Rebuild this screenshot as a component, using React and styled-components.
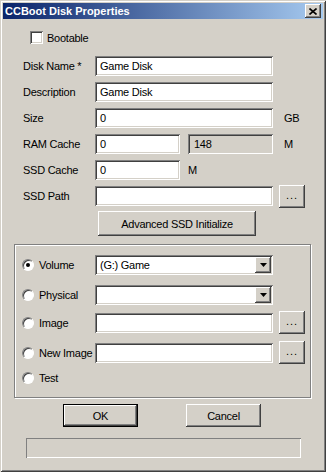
import React from 'react';
import styled, { createGlobalStyle, css } from 'styled-components';

const Global = createGlobalStyle`
  html, body { margin: 0; padding: 0; background: #d4d0c8; }
  body { font-family: "Liberation Sans", Arial, sans-serif; font-size: 11px; color: #000; letter-spacing: -0.25px; }
  * { box-sizing: border-box; }
`;

const raised = css`
  background: #d4d0c8;
  box-shadow: inset -1px -1px 0 #404040, inset 1px 1px 0 #ffffff, inset -2px -2px 0 #808080, inset 2px 2px 0 #d4d0c8;
`;

const sunken = css`
  box-shadow: inset 1px 1px 0 #808080, inset -1px -1px 0 #ffffff, inset 2px 2px 0 #404040, inset -2px -2px 0 #d4d0c8;
`;

const Window = styled.div`
  width: 326px;
  height: 472px;
  background: #d4d0c8;
  padding: 3px;
  display: flex;
  flex-direction: column;
  box-shadow: inset 1px 1px 0 #d4d0c8, inset -1px -1px 0 #404040, inset 2px 2px 0 #ffffff, inset -2px -2px 0 #808080;
`;

const TitleBar = styled.div`
  height: 16px;
  display: flex;
  align-items: center;
  justify-content: space-between;
  padding: 0 2px;
  background: linear-gradient(to right, #0a246a, #a6caf0);
  color: #fff;
  font-weight: bold;
  font-size: 11px;
  letter-spacing: 0;
`;

const CloseButton = styled.div`
  ${raised};
  width: 16px;
  height: 14px;
  display: flex;
  align-items: center;
  justify-content: center;
`;

const Body = styled.div`
  display: flex;
  flex-direction: column;
  align-items: flex-start;
  flex: 1;
`;

const CheckRow = styled.div`
  display: flex;
  align-items: center;
  height: 13px;
  margin: 12px 0 0 27px;
  gap: 4px;
`;

const CheckBox = styled.div`
  ${sunken};
  width: 13px;
  height: 13px;
  background: #fff;
`;

const Form = styled.div`
  display: flex;
  flex-direction: column;
  gap: 6px;
  margin: 12px 0 0 20px;
`;

const Row = styled.div`
  display: flex;
  align-items: center;
  height: 20px;
`;

const Label = styled.div`
  width: 72px;
  white-space: nowrap;
`;

const Field = styled.div`
  ${sunken};
  width: ${p => p.$w}px;
  height: 20px;
  margin-left: ${p => p.$ml || 0}px;
  background: ${p => (p.$readonly ? '#d4d0c8' : '#ffffff')};
  display: flex;
  align-items: center;
  padding: 0 2px 0 ${p => (p.$readonly ? 6 : 5)}px;
  white-space: nowrap;
  overflow: hidden;
`;

const FieldText = styled.span`
  flex: 1;
`;

const Unit = styled.div`
  margin-left: ${p => p.$ml}px;
`;

const Button = styled.div`
  ${raised};
  width: ${p => p.$w}px;
  height: ${p => p.$h}px;
  margin-left: ${p => p.$ml || 0}px;
  margin-top: ${p => p.$mt || 0}px;
  display: flex;
  align-items: center;
  justify-content: center;
  flex-shrink: 0;
  ${p => p.$default && css`
    border: 1px solid #000;
    box-shadow: inset -1px -1px 0 #404040, inset 1px 1px 0 #ffffff, inset -2px -2px 0 #808080;
  `}
`;

const Dots = styled.span`
  font-size: 11px;
  letter-spacing: 1px;
  margin-top: -3px;
`;

const DropButton = styled.div`
  ${raised};
  width: 16px;
  height: 16px;
  display: flex;
  align-items: center;
  justify-content: center;
`;

const Group = styled.div`
  width: 297px;
  height: 154px;
  margin: 8px 0 0 11px;
  border: 1px solid #808080;
  box-shadow: inset 1px 1px 0 #ffffff, 1px 1px 0 #ffffff;
  padding: 10px 0 0 7px;
  display: flex;
  flex-direction: column;
`;

const GroupRow = styled.div`
  display: flex;
  align-items: center;
  height: ${p => p.$h}px;
  margin-top: ${p => p.$mt || 0}px;
`;

const RadioLabel = styled.div`
  width: 73px;
  display: flex;
  align-items: center;
  gap: 5px;
  white-space: nowrap;
`;

const Radio = styled.div`
  width: 12px;
  height: 12px;
  border-radius: 50%;
  background: #fff;
  border: 1px solid;
  border-color: #808080 #ffffff #ffffff #808080;
  box-shadow: inset 1px 1px 0 #404040;
  display: flex;
  align-items: center;
  justify-content: center;
  flex-shrink: 0;
`;

const Dot = styled.div`
  width: 4px;
  height: 4px;
  border-radius: 50%;
  background: #000;
`;

const ButtonRow = styled.div`
  display: flex;
  margin: 6px 0 0 60px;
`;

const Status = styled.div`
  width: 275px;
  height: 20px;
  margin: 11px 0 0 23px;
  box-shadow: inset 1px 1px 0 #808080, inset -1px -1px 0 #ffffff;
`;

const Arrow = () => (
  <svg width="7" height="4" viewBox="0 0 7 4">
    <path d="M0 0h7L3.5 4z" fill="#000" />
  </svg>
);

const CloseIcon = () => (
  <svg width="8" height="7" viewBox="0 0 8 7">
    <path d="M0.5 0.5L7.5 6.5M7.5 0.5L0.5 6.5" stroke="#000" strokeWidth="1.6" />
  </svg>
);

export default function App() {
  return (
    <>
      <Global />
      <Window>
        <TitleBar>
          <span>CCBoot Disk Properties</span>
          <CloseButton><CloseIcon /></CloseButton>
        </TitleBar>
        <Body>
          <CheckRow>
            <CheckBox />
            <span>Bootable</span>
          </CheckRow>
          <Form>
            <Row>
              <Label>Disk Name *</Label>
              <Field $w={178}><FieldText>Game Disk</FieldText></Field>
            </Row>
            <Row>
              <Label>Description</Label>
              <Field $w={178}><FieldText>Game Disk</FieldText></Field>
            </Row>
            <Row>
              <Label>Size</Label>
              <Field $w={178}><FieldText>0</FieldText></Field>
              <Unit $ml={11}>GB</Unit>
            </Row>
            <Row>
              <Label>RAM Cache</Label>
              <Field $w={85}><FieldText>0</FieldText></Field>
              <Field $w={85} $ml={8} $readonly><FieldText>148</FieldText></Field>
              <Unit $ml={11}>M</Unit>
            </Row>
            <Row>
              <Label>SSD Cache</Label>
              <Field $w={85}><FieldText>0</FieldText></Field>
              <Unit $ml={8}>M</Unit>
            </Row>
            <Row>
              <Label>SSD Path</Label>
              <Field $w={178} />
              <Button $w={26} $h={23} $ml={6}><Dots>...</Dots></Button>
            </Row>
          </Form>
          <Button $w={158} $h={25} $ml={95} $mt={5}>Advanced SSD Initialize</Button>
          <Group>
            <GroupRow $h={20}>
              <RadioLabel><Radio><Dot /></Radio>Volume</RadioLabel>
              <Field $w={178}>
                <FieldText>(G:) Game</FieldText>
                <DropButton><Arrow /></DropButton>
              </Field>
            </GroupRow>
            <GroupRow $h={20} $mt={10}>
              <RadioLabel><Radio />Physical</RadioLabel>
              <Field $w={178}>
                <FieldText />
                <DropButton><Arrow /></DropButton>
              </Field>
            </GroupRow>
            <GroupRow $h={23} $mt={6}>
              <RadioLabel><Radio />Image</RadioLabel>
              <Field $w={178} />
              <Button $w={26} $h={23} $ml={6}><Dots>...</Dots></Button>
            </GroupRow>
            <GroupRow $h={23} $mt={7}>
              <RadioLabel><Radio />New Image</RadioLabel>
              <Field $w={178} />
              <Button $w={26} $h={23} $ml={6}><Dots>...</Dots></Button>
            </GroupRow>
            <GroupRow $h={20} $mt={4}>
              <RadioLabel><Radio />Test</RadioLabel>
            </GroupRow>
          </Group>
          <ButtonRow>
            <Button $w={75} $h={23} $default>OK</Button>
            <Button $w={75} $h={23} $ml={48}>Cancel</Button>
          </ButtonRow>
          <Status />
        </Body>
      </Window>
    </>
  );
}
